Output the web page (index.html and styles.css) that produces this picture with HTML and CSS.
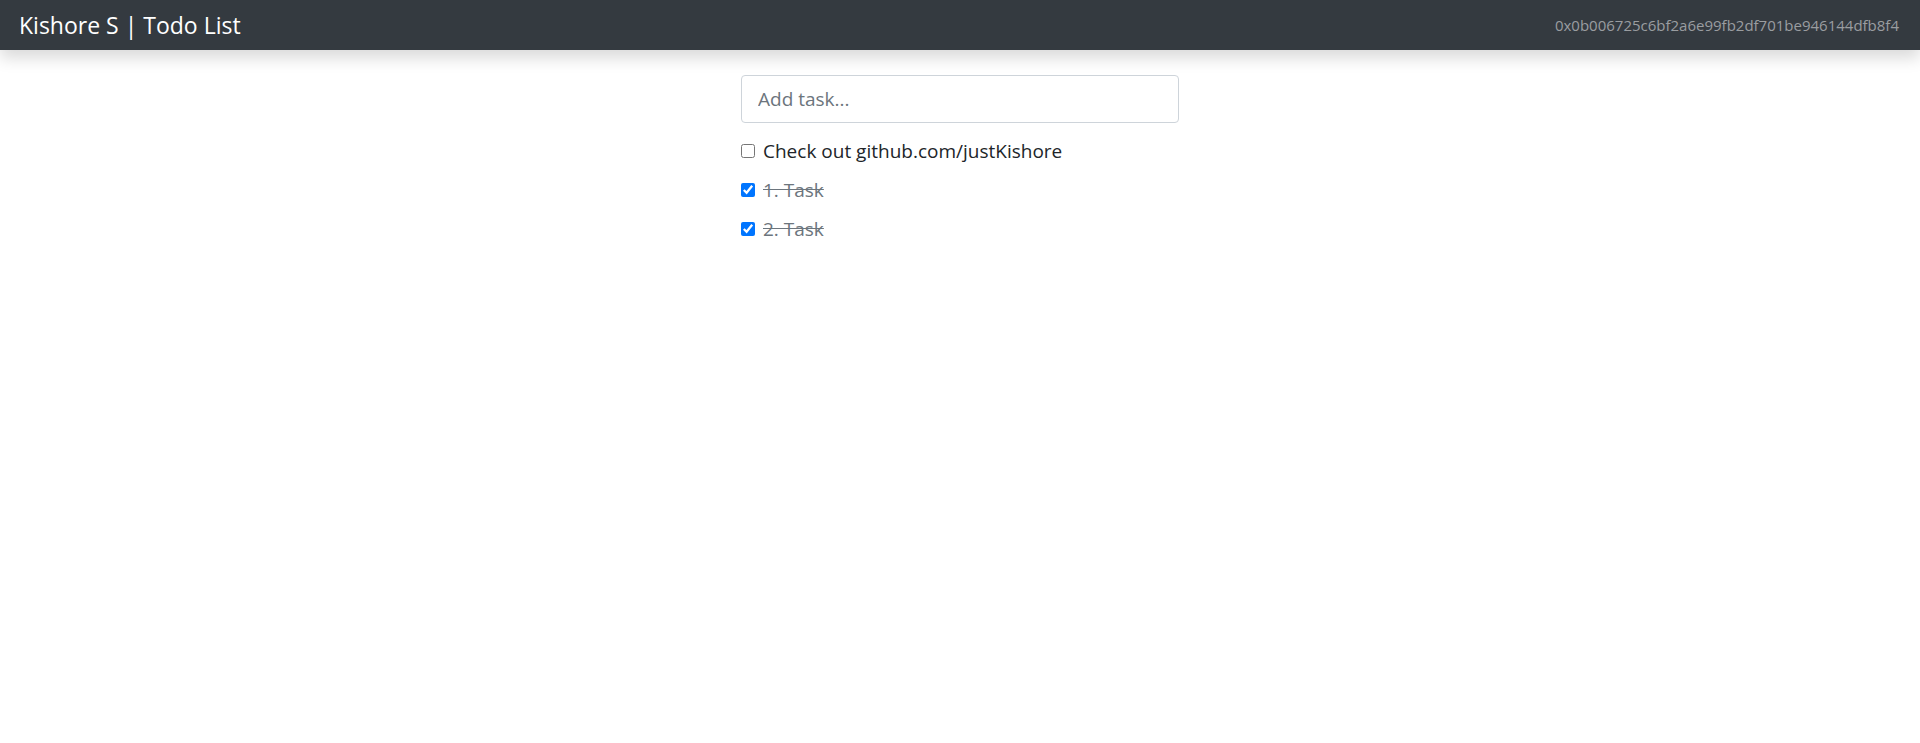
FILE: index.html
```html
<!DOCTYPE html>
<html lang="en">
<head>
<meta charset="utf-8">
<title>Kishore S | Todo List</title>
<link rel="stylesheet" href="styles.css">
</head>
<body>
<nav class="navbar">
  <span class="brand">Kishore S | Todo List</span>
  <span class="account">0x0b006725c6bf2a6e99fb2df701be946144dfb8f4</span>
</nav>
<main class="content">
  <form class="task-form">
    <input class="task-input" type="text" placeholder="Add task...">
  </form>
  <ul class="task-list">
    <li class="task"><input type="checkbox" class="task-check"><span class="task-text">Check out github.com/justKishore</span></li>
    <li class="task done"><input type="checkbox" class="task-check" checked><span class="task-text">1. Task</span></li>
    <li class="task done"><input type="checkbox" class="task-check" checked><span class="task-text">2. Task</span></li>
  </ul>
</main>
</body>
</html>
```
FILE: styles.css
```css
* { box-sizing: border-box; }
body {
  margin: 0;
  font-family: "Open Sans", "Noto Sans", sans-serif;
  color: #212529;
  background: #fff;
}
.navbar {
  height: 50px;
  background: #343a40;
  display: flex;
  align-items: center;
  justify-content: space-between;
  padding: 0 21px 0 19px;
  box-shadow: 0 8px 16px rgba(0,0,0,0.15);
}
.brand {
  color: #fff;
  font-size: 23px;
  line-height: 30px;
}
.account {
  color: #9a9da0;
  font-size: 15px;
}
.content {
  width: 438px;
  margin: 25px auto 0;
}
.task-form { margin: 0; }
.task-input {
  display: block;
  width: 100%;
  height: 48px;
  padding: 8px 16px;
  font-family: inherit;
  font-size: 19px;
  color: #495057;
  border: 1px solid #ced4da;
  border-radius: 4px;
  outline: none;
}
.task-input::placeholder { color: #6c757d; }
.task-list {
  list-style: none;
  margin: 8px 0 0;
  padding: 0;
}
.task {
  height: 39px;
  display: flex;
  align-items: center;
  font-size: 19px;
}
.task-check {
  width: 14px;
  height: 14px;
  margin: 0 8px 0 0;
}
.done .task-text {
  color: #6c757d;
  text-decoration: line-through;
}
```
